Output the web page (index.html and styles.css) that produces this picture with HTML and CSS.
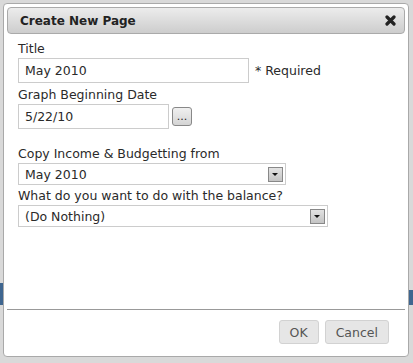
FILE: index.html
```html
<!DOCTYPE html>
<html lang="en">
<head>
    <meta charset="UTF-8">
    <title>Create New Page</title>
    <link rel="stylesheet" href="styles.css">
</head>
<body>
    <div class="dialog">
        <div class="titlebar">
            <span class="title">Create New Page</span>
            <svg class="close" width="11" height="11" viewBox="0 0 11 11">
                <path d="M2 2 L9 9 M9 2 L2 9" stroke="#222" stroke-width="3.2" stroke-linecap="round"/>
            </svg>
        </div>

        <div class="content">
            <label>Title</label>
            <div class="row">
                <input class="text title-input" type="text" value="May 2010">
                <span class="note">* Required</span>
            </div>

            <label>Graph Beginning Date</label>
            <div class="row">
                <input class="text date-input" type="text" value="5/22/10">
                <button class="pick">...</button>
            </div>

            <label class="spaced">Copy Income &amp; Budgetting from</label>
            <div class="select copy-select">
                <span>May 2010</span>
                <span class="arrow"></span>
            </div>

            <label>What do you want to do with the balance?</label>
            <div class="select balance-select">
                <span>(Do Nothing)</span>
                <span class="arrow"></span>
            </div>
        </div>

        <div class="footer">
            <button class="btn">OK</button>
            <button class="btn">Cancel</button>
        </div>
    </div>
</body>
</html>
```

FILE: styles.css
```css
html, body {
    margin: 0;
    height: 100%;
}
body {
    font-family: "DejaVu Sans", Verdana, sans-serif;
    font-size: 12.5px;
    color: #2a2a2a;
    padding: 3px 4px 0 3px;
    box-sizing: border-box;
    /* page behind the overlay: blue strip peeking at both edges */
    background:
        linear-gradient(#3f6690, #3f6690) 0 283px / 3px 22px no-repeat,
        linear-gradient(#3f6690, #3f6690) 409px 290px / 4px 15px no-repeat,
        #d9d9d9;
}
.dialog {
    width: 406px;
    height: 354px;
    box-sizing: border-box;
    background: #fff;
    border: 1px solid #a9a9a9;
    border-radius: 4px;
    padding: 3px;
    display: flex;
    flex-direction: column;
}
.titlebar {
    height: 27px;
    box-sizing: border-box;
    border: 1px solid #aaa;
    border-radius: 4px;
    background: linear-gradient(#ececec, #cdcdcd);
    display: flex;
    align-items: center;
    justify-content: space-between;
    padding: 0 8px 0 12px;
}
.title {
    font-weight: bold;
    font-size: 12px;
    color: #222;
}
.content {
    flex: 1;
    padding: 7px 0 0 11px;
}
label {
    display: block;
    line-height: 15px;
    margin-bottom: 2px;
}
label.spaced {
    margin-top: 17px;
}
.row {
    display: flex;
    align-items: center;
    gap: 6px;
    margin-bottom: 4px;
}
.text {
    font: inherit;
    color: #2a2a2a;
    height: 25px;
    box-sizing: border-box;
    border: 1px solid #ccc;
    padding: 0 6px;
    outline: none;
}
.title-input { width: 231px; }
.date-input { width: 151px; }
.pick {
    width: 20px;
    height: 19px;
    margin-left: -3px;
    padding: 0;
    font: inherit;
    font-size: 11px;
    line-height: 10px;
    border: 1px solid #888;
    border-radius: 3px;
    background: linear-gradient(#f0f0f0, #d4d4d4);
    color: #222;
}
.select {
    height: 22px;
    box-sizing: border-box;
    border: 1px solid #ccc;
    display: flex;
    align-items: center;
    justify-content: space-between;
    padding: 0 2px 0 6px;
    margin-bottom: 3px;
}
.copy-select { width: 268px; }
.balance-select { width: 310px; }
.arrow {
    width: 15px;
    height: 15px;
    box-sizing: border-box;
    border: 1px solid #888;
    background: linear-gradient(#e2e2e2, #c4c4c4);
    position: relative;
}
.arrow::after {
    content: "";
    position: absolute;
    left: 3px;
    top: 5px;
    border-left: 3px solid transparent;
    border-right: 3px solid transparent;
    border-top: 3px solid #111;
}
.footer {
    border-top: 1px solid #999;
    height: 44px;
    box-sizing: border-box;
    display: flex;
    justify-content: flex-end;
    align-items: flex-start;
    gap: 6px;
    padding: 10px 16px 0 0;
}
.btn {
    font: inherit;
    color: #555;
    height: 24px;
    padding: 0 10px;
    border: 1px solid #d2d2d2;
    border-radius: 3px;
    background: #e6e6e6;
}
```
